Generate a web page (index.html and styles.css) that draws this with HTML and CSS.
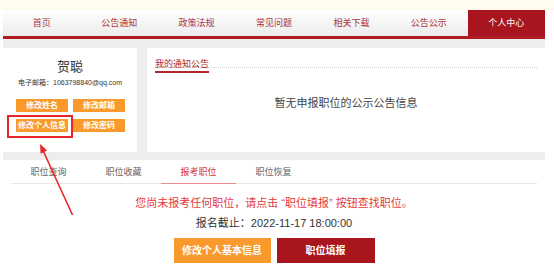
FILE: index.html
```html
<!DOCTYPE html>
<html lang="zh-CN">
<head>
<meta charset="utf-8">
<title>个人中心</title>
<link rel="stylesheet" href="styles.css">
</head>
<body>
<div class="topstrip"></div>
<div class="wrap">
  <nav class="nav">
    <a class="nav-item">首页</a>
    <a class="nav-item">公告通知</a>
    <a class="nav-item">政策法规</a>
    <a class="nav-item">常见问题</a>
    <a class="nav-item">相关下载</a>
    <a class="nav-item">公告公示</a>
    <a class="nav-item active">个人中心</a>
  </nav>
  <main class="main">
    <div class="row">
      <section class="card profile">
        <div class="name">贺聪</div>
        <div class="email">电子邮箱：1063798840@qq.com</div>
        <div class="btns">
          <a class="sbtn">修改姓名</a>
          <a class="sbtn">修改邮箱</a>
          <a class="sbtn marked">修改个人信息<span class="mark-box"></span></a>
          <a class="sbtn">修改密码</a>
        </div>
      </section>
      <section class="card notice">
        <div class="notice-head"><span class="notice-title">我的通知公告</span></div>
        <div class="notice-empty">暂无申报职位的公示公告信息</div>
      </section>
    </div>
    <section class="card jobs">
      <div class="tabs">
        <a class="tab">职位查询</a>
        <a class="tab">职位收藏</a>
        <a class="tab active">报考职位</a>
        <a class="tab">职位恢复</a>
      </div>
      <p class="warn">您尚未报考任何职位，请点击 “职位填报” 按钮查找职位。</p>
      <p class="deadline">报名截止：2022-11-17 18:00:00</p>
      <div class="actions">
        <a class="bbtn orange">修改个人基本信息</a>
        <a class="bbtn red">职位填报</a>
      </div>
    </section>
  </main>
</div>
<svg class="arrow" width="554" height="276" viewBox="0 0 554 276">
  <line x1="43.7" y1="152" x2="72.5" y2="215" stroke="#e8262a" stroke-width="1.6"/>
  <polygon points="40,144 47.2,150.6 40.6,153.8" fill="#e8262a"/>
</svg>
</body>
</html>
```
FILE: styles.css
```css
* { box-sizing: border-box; }
html, body { margin: 0; padding: 0; }
body {
  position: relative;
  width: 554px;
  height: 276px;
  overflow: hidden;
  background: #fff;
  font-family: "Liberation Sans", "Noto Sans CJK SC", sans-serif;
  color: #333;
}
p { margin: 0; }
a { text-decoration: none; }

.topstrip { height: 10px; background: #fffbee; }

.wrap { margin-left: 3px; width: 542px; }

.nav {
  display: flex;
  height: 29px;
  background: linear-gradient(#ffffff, #ebebeb);
  border-bottom: 3px solid #b01c24;
}
.nav-item {
  flex: 1;
  text-align: center;
  font-size: 9px;
  line-height: 26px;
  color: #a8323a;
}
.nav-item.active { background: #a8151e; color: #fff; }

.main { background: #ededed; padding-top: 9px; }

.row { display: flex; gap: 10px; height: 104px; }
.card { background: #fff; }

.profile { width: 134px; padding-top: 10px; text-align: center; }
.name { font-size: 13px; line-height: 18px; color: #333; }
.email { font-size: 7px; line-height: 10px; margin-top: 2px; color: #333; }
.btns {
  display: grid;
  grid-template-columns: 52px 52px;
  gap: 7px 5px;
  justify-content: center;
  margin-top: 11px;
  padding-left: 1px;
}
.sbtn {
  display: block;
  height: 13px;
  line-height: 13px;
  background: #fa9a2c;
  color: #fff;
  font-size: 8px;
  font-weight: bold;
}
.marked { position: relative; }
.mark-box {
  position: absolute;
  left: -9px;
  top: -4px;
  width: 66px;
  height: 23px;
  border: 2px solid #e8262a;
}

.notice { flex: 1; padding: 5px 8px 0; }
.notice-head { border-bottom: 1px dotted #cfcfcf; height: 15px; }
.notice-title {
  display: inline-block;
  font-size: 9px;
  line-height: 13px;
  color: #b3262c;
  border-bottom: 2px solid #b3262c;
}
.notice-empty {
  text-align: center;
  font-size: 11px;
  line-height: 16px;
  color: #444;
  margin-top: 27px;
}

.jobs { margin-top: 8px; padding: 0 8px 20px; text-align: center; }
.tabs {
  display: flex;
  height: 24px;
  border-bottom: 1px solid #e6e6e6;
}
.tab {
  width: 75px;
  font-size: 9px;
  line-height: 24px;
  color: #666;
}
.tab.active { color: #d6333a; border-bottom: 1px solid #f08a8a; height: 24px; }

.warn { margin-top: 11px; font-size: 11px; line-height: 16px; color: #e4393c; }
.deadline { margin-top: 4px; font-size: 11px; line-height: 16px; color: #333; }

.actions { display: flex; justify-content: center; gap: 6px; margin-top: 7px; }
.bbtn {
  display: block;
  height: 25px;
  line-height: 25px;
  color: #fff;
  font-size: 10px;
  font-weight: bold;
}
.bbtn.orange { width: 97px; background: #fa9a2c; }
.bbtn.red { width: 98px; background: #a9151d; }

.arrow { position: absolute; left: 0; top: 0; pointer-events: none; }
```
